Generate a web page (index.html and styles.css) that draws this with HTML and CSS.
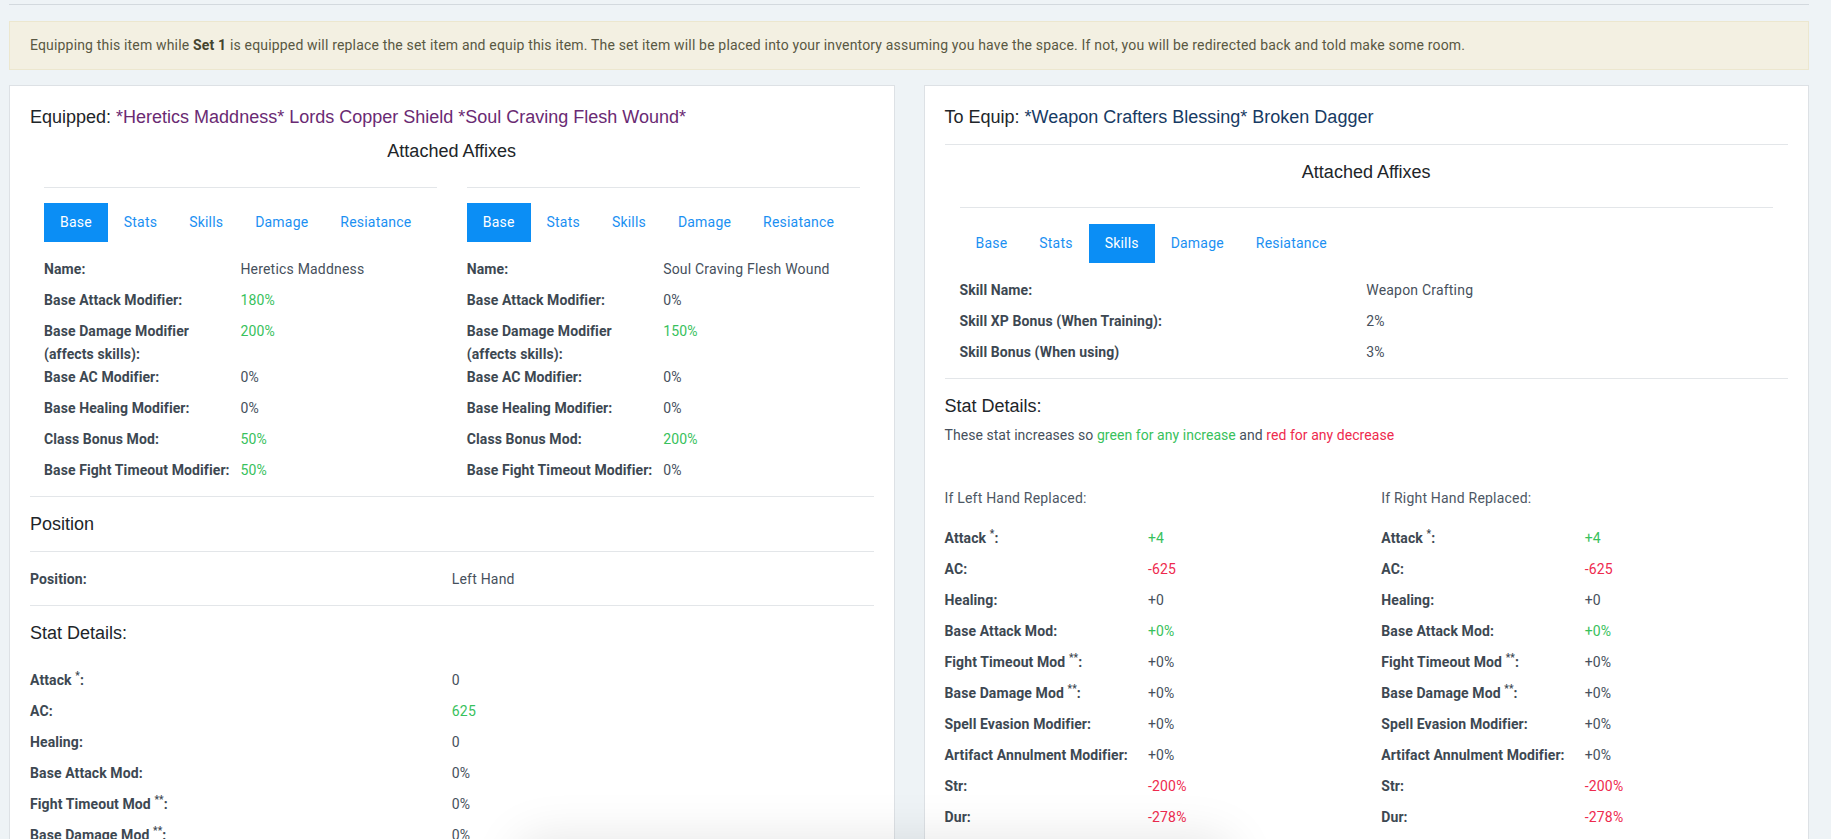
FILE: index.html
```html
<!DOCTYPE html>
<html>
<head>
<meta charset="utf-8">
<link rel="stylesheet" href="styles.css">
</head>
<body>
<div class="page">
  <div class="topbar"></div>
  <div class="alert">Equipping this item while <strong>Set 1</strong> is equipped will replace the set item and equip this item. The set item will be placed into your inventory assuming you have the space. If not, you will be redirected back and told make some room.</div>

  <div class="compare">
    <section class="card">
      <h2 class="title">Equipped: <span class="item-set">*Heretics Maddness* Lords Copper Shield *Soul Craving Flesh Wound*</span></h2>
      <h3 class="affix-title affix-title-left">Attached Affixes</h3>
      <div class="affix-cols">
        <div class="affix">
          <hr class="rule rule-affix">
          <ul class="tabs">
            <li class="tab active">Base</li>
            <li class="tab">Stats</li>
            <li class="tab">Skills</li>
            <li class="tab">Damage</li>
            <li class="tab">Resiatance</li>
          </ul>
          <dl class="rows">
            <dt>Name:</dt><dd>Heretics Maddness</dd>
            <dt>Base Attack Modifier:</dt><dd class="up">180%</dd>
            <dt>Base Damage Modifier (affects skills):</dt><dd class="up">200%</dd>
            <dt>Base AC Modifier:</dt><dd>0%</dd>
            <dt>Base Healing Modifier:</dt><dd>0%</dd>
            <dt>Class Bonus Mod:</dt><dd class="up">50%</dd>
            <dt>Base Fight Timeout Modifier:</dt><dd class="up">50%</dd>
          </dl>
        </div>
        <div class="affix">
          <hr class="rule rule-affix">
          <ul class="tabs">
            <li class="tab active">Base</li>
            <li class="tab">Stats</li>
            <li class="tab">Skills</li>
            <li class="tab">Damage</li>
            <li class="tab">Resiatance</li>
          </ul>
          <dl class="rows">
            <dt>Name:</dt><dd>Soul Craving Flesh Wound</dd>
            <dt>Base Attack Modifier:</dt><dd>0%</dd>
            <dt>Base Damage Modifier (affects skills):</dt><dd class="up">150%</dd>
            <dt>Base AC Modifier:</dt><dd>0%</dd>
            <dt>Base Healing Modifier:</dt><dd>0%</dd>
            <dt>Class Bonus Mod:</dt><dd class="up">200%</dd>
            <dt>Base Fight Timeout Modifier:</dt><dd>0%</dd>
          </dl>
        </div>
      </div>
      <hr class="rule rule-after-rows">
      <h3 class="section-title">Position</h3>
      <hr class="rule rule-after-title">
      <dl class="rows rows-first">
        <dt>Position:</dt><dd>Left Hand</dd>
      </dl>
      <hr class="rule rule-after-rows">
      <h3 class="section-title">Stat Details:</h3>
      <dl class="rows rows-stats">
        <dt>Attack <sup>*</sup>:</dt><dd>0</dd>
        <dt>AC:</dt><dd class="up">625</dd>
        <dt>Healing:</dt><dd>0</dd>
        <dt>Base Attack Mod:</dt><dd>0%</dd>
        <dt>Fight Timeout Mod <sup>**</sup>:</dt><dd>0%</dd>
        <dt>Base Damage Mod <sup>**</sup>:</dt><dd>0%</dd>
        <dt>Spell Evasion Modifier:</dt><dd>0%</dd>
        <dt>Artifact Annulment Modifier:</dt><dd>0%</dd>
        <dt>Str:</dt><dd class="up">200%</dd>
        <dt>Dur:</dt><dd class="up">278%</dd>
      </dl>
    </section>

    <section class="card">
      <h2 class="title">To Equip: <span class="item-normal">*Weapon Crafters Blessing* Broken Dagger</span></h2>
      <hr class="rule rule-after-heading">
      <h3 class="affix-title affix-title-right">Attached Affixes</h3>
      <div class="affix affix-single">
        <hr class="rule rule-affix-right">
        <ul class="tabs">
          <li class="tab">Base</li>
          <li class="tab">Stats</li>
          <li class="tab active">Skills</li>
          <li class="tab">Damage</li>
          <li class="tab">Resiatance</li>
        </ul>
        <dl class="rows">
          <dt>Skill Name:</dt><dd>Weapon Crafting</dd>
          <dt>Skill XP Bonus (When Training):</dt><dd>2%</dd>
          <dt>Skill Bonus (When using)</dt><dd>3%</dd>
        </dl>
      </div>
      <hr class="rule rule-after-rows">
      <h3 class="section-title">Stat Details:</h3>
      <p class="legend">These stat increases so <span class="up">green for any increase</span> and <span class="down">red for any decrease</span></p>
      <div class="diff-cols">
        <div class="diff">
          <p class="diff-title">If Left Hand Replaced:</p>
          <dl class="rows">
            <dt>Attack <sup>*</sup>:</dt><dd class="up">+4</dd>
            <dt>AC:</dt><dd class="down">-625</dd>
            <dt>Healing:</dt><dd>+0</dd>
            <dt>Base Attack Mod:</dt><dd class="up">+0%</dd>
            <dt>Fight Timeout Mod <sup>**</sup>:</dt><dd>+0%</dd>
            <dt>Base Damage Mod <sup>**</sup>:</dt><dd>+0%</dd>
            <dt>Spell Evasion Modifier:</dt><dd>+0%</dd>
            <dt>Artifact Annulment Modifier:</dt><dd>+0%</dd>
            <dt>Str:</dt><dd class="down">-200%</dd>
            <dt>Dur:</dt><dd class="down">-278%</dd>
            <dt>Int:</dt><dd class="down">-200%</dd>
          </dl>
        </div>
        <div class="diff">
          <p class="diff-title">If Right Hand Replaced:</p>
          <dl class="rows">
            <dt>Attack <sup>*</sup>:</dt><dd class="up">+4</dd>
            <dt>AC:</dt><dd class="down">-625</dd>
            <dt>Healing:</dt><dd>+0</dd>
            <dt>Base Attack Mod:</dt><dd class="up">+0%</dd>
            <dt>Fight Timeout Mod <sup>**</sup>:</dt><dd>+0%</dd>
            <dt>Base Damage Mod <sup>**</sup>:</dt><dd>+0%</dd>
            <dt>Spell Evasion Modifier:</dt><dd>+0%</dd>
            <dt>Artifact Annulment Modifier:</dt><dd>+0%</dd>
            <dt>Str:</dt><dd class="down">-200%</dd>
            <dt>Dur:</dt><dd class="down">-278%</dd>
            <dt>Int:</dt><dd class="down">-200%</dd>
          </dl>
        </div>
      </div>
    </section>
  </div>
</div>
<div class="floating-panel"></div>
</body>
</html>
```

FILE: styles.css
```css
html, body {
  margin: 0;
  padding: 0;
}
body {
  background: #eef3f6;
  font-family: Roboto, "Liberation Sans", Arial, sans-serif;
  font-size: 14px;
  letter-spacing: 0.2px;
  color: #3d4852;
  overflow: hidden;
}
.page {
  margin-left: 9px;
  width: 1800px;
}
.topbar {
  height: 4px;
  border-bottom: 1px solid #d3d9de;
}
.alert {
  margin-top: 16px;
  background: #f3f0e2;
  border: 1px solid #ece7cf;
  padding: 14px 20px;
  line-height: 19px;
  font-size: 14px;
  letter-spacing: 0.17px;
  color: #595843;
}
.alert strong {
  font-weight: 700;
  color: #45442f;
}
.compare {
  margin-top: 15px;
  display: grid;
  grid-template-columns: 1fr 1fr;
  column-gap: 29px;
  align-items: start;
}
.card {
  background: #fff;
  border: 1px solid #dde1e5;
  padding: 20px;
  min-height: 900px;
}
.title {
  margin: 0;
  font-family: "Liberation Sans", Arial, sans-serif;
  font-weight: 400;
  font-size: 18px;
  line-height: 22px;
  letter-spacing: 0;
  color: #212529;
}
.item-set { color: #6a2a73; }
.item-normal { color: #173a63; }

.affix-title {
  margin: 0;
  text-align: center;
  font-family: "Liberation Sans", Arial, sans-serif;
  font-weight: 400;
  font-size: 18px;
  line-height: 22px;
  letter-spacing: 0;
  color: #212529;
}
.affix-title-left { margin-top: 12px; }
.affix-title-right { margin-top: 16px; }

.rule {
  border: 0;
  border-top: 1px solid #e3e6e9;
  margin: 0;
}
.rule-affix { margin-top: 25px; margin-bottom: 15px; }
.rule-affix-right { margin-top: 24px; margin-bottom: 16px; }
.rule-after-heading { margin-top: 16px; }
.rule-after-rows { margin-top: 6px; }
.rule-after-title { margin-top: 16px; }

.affix-cols {
  display: grid;
  grid-template-columns: 1fr 1fr;
  column-gap: 30px;
  padding: 0 14px;
}
.affix-single {
  padding: 0 15px;
}

.tabs {
  list-style: none;
  margin: 0 0 16px 0;
  padding: 0;
  display: flex;
}
.tab {
  padding: 9px 16px;
  line-height: 21px;
  font-size: 14px;
  color: #1b90f2;
}
.tab.active {
  background: #0b8ef5;
  color: #fff;
}

.rows {
  display: grid;
  grid-template-columns: 1fr 1fr;
  margin: 0;
  line-height: 23px;
  font-size: 14px;
}
.rows dt {
  font-weight: 700;
  color: #3d4852;
  letter-spacing: 0.1px;
  padding-right: 6px;
}
.rows dd {
  margin: 0 0 8px 0;
  color: #46505c;
}
.rows sup {
  font-size: 10px;
  line-height: 0;
}
.up { color: #38c15c; }
.rows dd.up { color: #38c15c; }
.down { color: #ee2a4e; }
.rows dd.down { color: #ee2a4e; }

.section-title {
  margin: 16px 0 0 0;
  font-family: "Liberation Sans", Arial, sans-serif;
  font-weight: 400;
  font-size: 18px;
  line-height: 22px;
  letter-spacing: 0;
  color: #212529;
}
.rows-first { margin-top: 16px; }
.rows-stats { margin-top: 25px; }

.legend {
  margin: 7px 0 0 0;
  line-height: 23px;
  font-size: 14px;
  letter-spacing: 0.05px;
  color: #46505c;
}
.diff-cols {
  display: grid;
  grid-template-columns: 1fr 1fr;
  column-gap: 30px;
  margin-top: 40px;
}
.diff-title {
  margin: 0 0 17px 0;
  line-height: 23px;
  font-size: 14px;
  color: #4d5764;
}

.floating-panel {
  position: fixed;
  left: 530px;
  width: 690px;
  top: 850px;
  height: 120px;
  background: #fff;
  box-shadow: 0 0 50px 12px rgba(0,0,0,0.10);
  border-radius: 8px;
}
```
